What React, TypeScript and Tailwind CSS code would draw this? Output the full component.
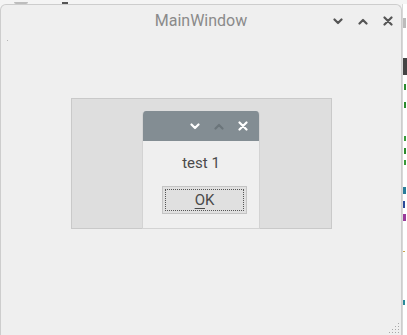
const Chevron = ({ up = false, color }: { up?: boolean; color: string }) => (
  <svg width="10" height="7" viewBox="0 0 10 7" fill="none">
    <path
      d={up ? "M1.5 5.5 5 2l3.5 3.5" : "M1.5 1.5 5 5l3.5-3.5"}
      stroke={color}
      strokeWidth="2.2"
      strokeLinecap="round"
      strokeLinejoin="round"
    />
  </svg>
);

const Close = ({ color }: { color: string }) => (
  <svg width="10" height="10" viewBox="0 0 10 10" fill="none">
    <path d="M1.5 1.5l7 7M8.5 1.5l-7 7" stroke={color} strokeWidth="2.2" strokeLinecap="round" />
  </svg>
);

export default function App() {
  return (
    <div
      className="relative w-[407px] h-[335px] overflow-hidden bg-[#f4f4f4]"
      style={{ fontFamily: "Roboto, 'Noto Sans', sans-serif" }}
    >
      {/* top panel strip */}
      <div className="h-[4px] flex items-end">
        <div className="ml-[14px] w-[14px] h-[2px] rounded-b-full bg-[#bdbdbd]" />
        <div className="ml-[34px] w-[6px] h-[2px] bg-[#555]" />
      </div>

      <div className="flex h-[331px]">
        {/* main window */}
        <div className="relative w-[402px] h-full rounded-t-[6px] border border-[#cdcdcd] border-b-0 bg-[#efefef]">
          {/* title bar */}
          <div className="relative h-[32px] flex items-center justify-center">
            <span className="text-[16px] text-[#8a8a8a]">MainWindow</span>
            <div className="absolute right-[8px] top-[11px] flex items-center gap-[15px]">
              <Chevron color="#555" />
              <Chevron up color="#555" />
              <Close color="#555" />
            </div>
          </div>

          <div className="ml-[6px] mt-[3px] w-[1px] h-[1px] bg-[#b5b5b5]" />

          {/* inner frame */}
          <div className="ml-[70px] mt-[57px] w-[261px] h-[131px] bg-[#dedede] border border-[#c9c9c9]" />

          {/* size grip */}
          <div className="absolute right-[2px] bottom-[2px] grid grid-cols-4 gap-[2px]">
            {[0, 0, 0, 1, 0, 0, 1, 1, 0, 1, 1, 1, 1, 1, 1, 1].map((v, i) => (
              <div key={i} className={v ? "w-[1px] h-[1px] bg-[#a8a8a8]" : "w-[1px] h-[1px]"} />
            ))}
          </div>

          {/* dialog */}
          <div className="absolute left-[141px] top-[106px] w-[118px] h-[118px] flex flex-col rounded-t-[4px] overflow-hidden border border-t-0 border-[#d3d3d3] bg-[#efefef]">
            <div className="h-[30px] shrink-0 bg-[#838d93] flex items-center justify-end pr-[11px] gap-[14px]">
              <Chevron color="#ffffff" />
              <Chevron up color="#6b757a" />
              <Close color="#ffffff" />
            </div>
            <div className="flex flex-col items-center">
              <div className="mt-[13px] text-[15px] leading-[18px] text-[#4a4a4a]">test 1</div>
              <button className="mt-[14px] ml-[7px] w-[85px] h-[28px] bg-[#e0e0e0] border border-[#c4c4c4] p-[2px]">
                <div className="w-full h-full border border-dotted border-[#555] flex items-center justify-center text-[15px] text-[#4a4a4a]">
                  <span className="underline underline-offset-[3px] decoration-[1px]">O</span>K
                </div>
              </button>
            </div>
          </div>
        </div>

        {/* background window edge */}
        <div className="flex-1 flex flex-col bg-white border-l border-[#d8d8d8]">
          <div className="h-[14px]" />
          <div className="h-[10px] w-[3px] bg-[#bbb]" />
          <div className="mt-[30px] h-[17px] bg-[#444]" />
          <div className="mt-[9px] ml-[1px] w-[2px] h-[6px] bg-[#2e8b2e]" />
          <div className="mt-[12px] ml-[1px] w-[2px] h-[6px] bg-[#2e8b2e]" />
          <div className="mt-[28px] ml-[1px] w-[2px] h-[5px] bg-[#3a9a3a]" />
          <div className="mt-[7px] ml-[1px] w-[2px] h-[6px] bg-[#2e8b2e]" />
          <div className="mt-[6px] ml-[1px] w-[2px] h-[5px] bg-[#3a9a3a]" />
          <div className="mt-[22px] w-[3px] h-[7px] bg-[#2a7d9a]" />
          <div className="mt-[7px] w-[2px] h-[7px] bg-[#2a4a9a]" />
          <div className="mt-[6px] w-[3px] h-[7px] bg-[#9a3a9a]" />
          <div className="mt-[30px] w-[2px] h-[1px] bg-[#c9a14a]" />
          <div className="mt-[48px] w-[2px] h-[5px] bg-[#2a8a9a]" />
        </div>
      </div>
    </div>
  );
}
